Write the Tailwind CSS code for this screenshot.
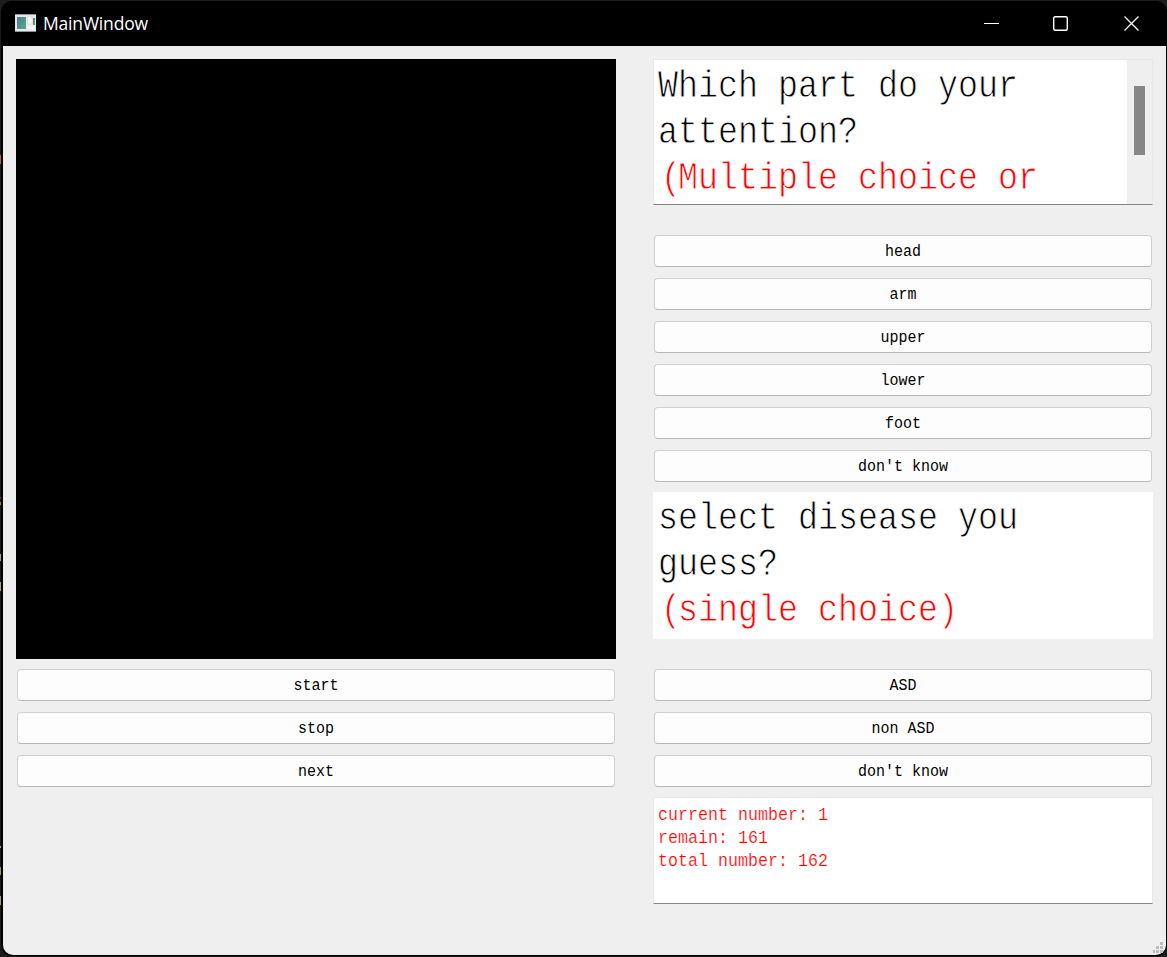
<!DOCTYPE html>
<html lang="en">
<head>
<meta charset="utf-8">
<title>MainWindow</title>
<script src="https://cdn.jsdelivr.net/npm/@tailwindcss/browser@4"></script>
</head>
<body class="w-[1167px] h-[957px] overflow-hidden bg-[#1c1c1c]">
<div class="relative w-[1167px] h-[957px] pl-px pt-px overflow-hidden bg-[#1c1c1c]">
  <!-- slivers of the editor behind the window -->
  <div class="absolute left-0 top-[155px] w-px h-[9px] bg-[#b5653a]"></div>
  <div class="absolute left-0 top-[497px] w-px h-[2px] bg-[#8a2a2a]"></div>
  <div class="absolute left-0 top-[502px] w-px h-[3px] bg-[#b08040]"></div>
  <div class="absolute left-0 top-[554px] w-px h-[7px] bg-[#a8a090]"></div>
  <div class="absolute left-0 top-[582px] w-px h-[9px] bg-[#b0a080]"></div>
  <div class="absolute left-0 top-[846px] w-px h-[2px] bg-[#a8a080]"></div>
  <div class="absolute left-0 top-[867px] w-px h-[8px] bg-[#a09078]"></div>
  <div class="absolute left-0 top-[896px] w-px h-[9px] bg-[#b09a70]"></div>

  <div class="w-[1166px] h-[955px] flex flex-col bg-black rounded-[11px] overflow-hidden pl-[2px] pr-px pb-px">
    <header class="h-[45px] shrink-0 flex items-center justify-between pl-3">
      <div class="flex items-center gap-[7px]">
        <svg width="21" height="18" viewBox="0 0 21 18" class="-mt-[2px]">
          <defs>
            <linearGradient id="a" x1="0" y1="0" x2="1" y2="1"><stop offset="0" stop-color="#4a78a8"/><stop offset="1" stop-color="#58ad78"/></linearGradient>
          </defs>
          <rect width="21" height="18" fill="#e6e8ea"/>
          <rect width="21" height="1" fill="#8d949c"/>
          <rect y="17" width="21" height="1" fill="#8d949c"/>
          <rect x="2" y="3" width="9" height="12" fill="url(#a)"/>
          <rect x="12.500" y="3" width="4.500" height="7" fill="#f8f8f8" stroke="#d0d0d0" stroke-width=".5"/>
          <rect x="18" y="4" width="2" height="7" fill="url(#a)"/>
          <rect x="12.500" y="11.500" width="7" height="4" fill="#f5f5f5"/>
        </svg>
        <span class="text-[17.500px] leading-6 tracking-[-0.180px] -mt-[2px] text-white font-['Open_Sans','Noto_Sans',sans-serif]">MainWindow</span>
      </div>
      <svg width="160" height="17" viewBox="0 0 160 17" fill="none" stroke="#fff" class="mr-[23px] -mt-px">
        <path d="M1 8.500h15" />
        <rect x="70.700" y="1.700" width="13.600" height="13.600" rx="1.500" stroke-width="1.400"/>
        <path d="M141.500 1.500l14 14M155.500 1.500l-14 14" stroke-width="1.300"/>
      </svg>
    </header>

    <main class="relative flex-1 min-h-0 bg-[#efefef] rounded-b-[10px] flex items-start gap-[37px] pl-[13px] pt-[13px] text-black font-['Liberation_Mono',monospace]">
      <section class="w-[600px] flex flex-col">
        <div class="h-[600px] bg-black"></div>
        <div class="flex flex-col gap-[11px] px-px pt-[10px] text-[15px]">
          <button class="h-8 pt-[4px] rounded-[4px] border border-[#d0d0d0] border-b-[#b8b8b8] bg-[#fdfdfd]"><span class="inline-block scale-y-115">start</span></button>
          <button class="h-8 pt-[4px] rounded-[4px] border border-[#d0d0d0] border-b-[#b8b8b8] bg-[#fdfdfd]"><span class="inline-block scale-y-115">stop</span></button>
          <button class="h-8 pt-[4px] rounded-[4px] border border-[#d0d0d0] border-b-[#b8b8b8] bg-[#fdfdfd]"><span class="inline-block scale-y-115">next</span></button>
        </div>
      </section>

      <section class="w-[500px] flex flex-col">
        <div class="h-[146px] flex bg-white border border-[#e8e8e8] border-b-[#868686] overflow-hidden">
          <div class="flex-1 pl-1 pt-[4px] text-[33.330px] leading-[46px] whitespace-nowrap [-webkit-text-stroke:0.7px_white]">
            <p class="scale-y-115">Which part do your</p>
            <p class="scale-y-115">attention?</p>
            <p class="scale-y-115 pl-[3px] text-[#ff0000]"><span class="tracking-[-3px]">(</span>Multiple choice or</p>
          </div>
          <div class="w-[25px] bg-[#efefef] pl-[7px] pt-[26px]">
            <div class="w-[11px] h-[69px] bg-[#868686]"></div>
          </div>
        </div>

        <div class="flex flex-col gap-[11px] px-px pt-[30px] text-[15px]">
          <button class="h-8 pt-[4px] rounded-[4px] border border-[#d0d0d0] border-b-[#b8b8b8] bg-[#fdfdfd]"><span class="inline-block scale-y-115">head</span></button>
          <button class="h-8 pt-[4px] rounded-[4px] border border-[#d0d0d0] border-b-[#b8b8b8] bg-[#fdfdfd]"><span class="inline-block scale-y-115">arm</span></button>
          <button class="h-8 pt-[4px] rounded-[4px] border border-[#d0d0d0] border-b-[#b8b8b8] bg-[#fdfdfd]"><span class="inline-block scale-y-115">upper</span></button>
          <button class="h-8 pt-[4px] rounded-[4px] border border-[#d0d0d0] border-b-[#b8b8b8] bg-[#fdfdfd]"><span class="inline-block scale-y-115">lower</span></button>
          <button class="h-8 pt-[4px] rounded-[4px] border border-[#d0d0d0] border-b-[#b8b8b8] bg-[#fdfdfd]"><span class="inline-block scale-y-115">foot</span></button>
          <button class="h-8 pt-[4px] rounded-[4px] border border-[#d0d0d0] border-b-[#b8b8b8] bg-[#fdfdfd]"><span class="inline-block scale-y-115">don't know</span></button>
        </div>

        <div class="mt-[10px] h-[147px] bg-white pl-[5px] pt-[4px] text-[33.330px] leading-[46px] whitespace-nowrap [-webkit-text-stroke:0.7px_white]">
          <p class="scale-y-115">select disease you</p>
          <p class="scale-y-115">guess?</p>
          <p class="scale-y-115 pl-[3px] text-[#ff0000]"><span class="tracking-[-3px]">(</span>single choice)</p>
        </div>

        <div class="flex flex-col gap-[11px] px-px pt-[30px] text-[15px]">
          <button class="h-8 pt-[4px] rounded-[4px] border border-[#d0d0d0] border-b-[#b8b8b8] bg-[#fdfdfd]"><span class="inline-block scale-y-115">ASD</span></button>
          <button class="h-8 pt-[4px] rounded-[4px] border border-[#d0d0d0] border-b-[#b8b8b8] bg-[#fdfdfd]"><span class="inline-block scale-y-115">non ASD</span></button>
          <button class="h-8 pt-[4px] rounded-[4px] border border-[#d0d0d0] border-b-[#b8b8b8] bg-[#fdfdfd]"><span class="inline-block scale-y-115">don't know</span></button>
        </div>

        <div class="mt-[10px] h-[107px] bg-white border border-[#e8e8e8] border-b-[#868686] pl-1 pt-[5px] text-[16.670px] leading-[23px] text-[#ff0000] [-webkit-text-stroke:0.2px_white]">
          <p class="scale-y-115">current number: 1</p>
          <p class="scale-y-115">remain: 161</p>
          <p class="scale-y-115">total number: 162</p>
        </div>
      </section>

      <!-- size grip -->
      <svg class="absolute right-[3px] bottom-[2px]" width="10" height="11" viewBox="0 0 10 11" fill="#bdbdbd">
        <path d="M7 0h3v3H7zM3 4h3v3H3zM7 4h3v3H7zM0 8h2v3H0zM3 8h3v3H3zM7 8h3v3H7z"/>
      </svg>
    </main>
  </div>
</div>
</body>
</html>
